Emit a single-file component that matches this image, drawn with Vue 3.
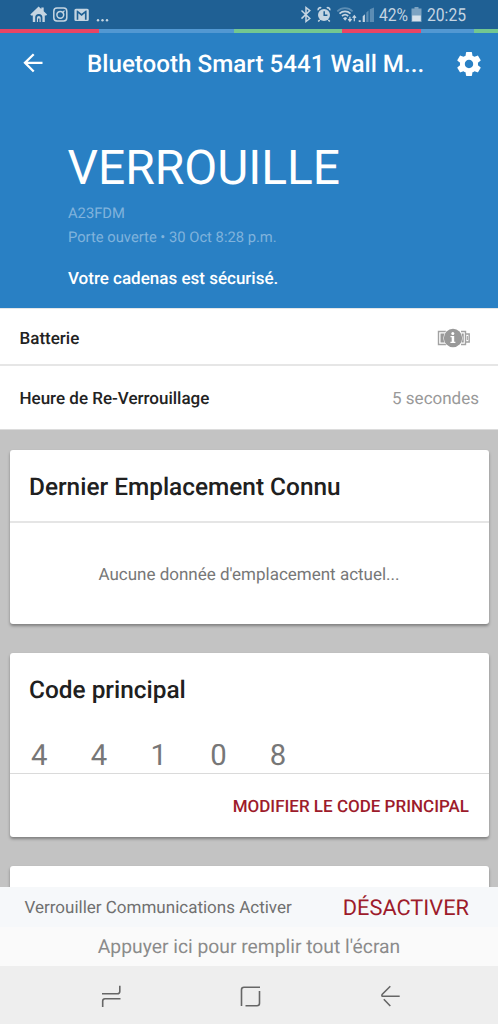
<script setup>
const digits = ['4', '4', '1', '0', '8']
</script>

<template>
  <div class="screen">
    <div class="status">
      <svg class="status-left" viewBox="0 0 84 29" width="84" height="29">
        <g fill="#c5d5e2">
          <path d="M8.600 6.600 11.300 9V7.600h2.400v3.600l3.400 3.300-.9 1H14.800V22h-2.400v-4.400a3.600 3.600 0 0 0-7.200 0V22H2.800v-6.500H1.100l-.8-1z" />
          <path d="M6.900 22v-4.200a1.900 1.900 0 0 1 3.800 0V22H9.500v-3.500H8V22z" />
          <path fill-rule="evenodd" d="M46 8.700h11.200a1.600 1.600 0 0 1 1.600 1.600v9.200a1.600 1.600 0 0 1-1.600 1.600H46a1.600 1.600 0 0 1-1.600-1.600v-9.200A1.600 1.600 0 0 1 46 8.700zM46.700 19.700h1.600v-6.400l3.300 2.700 3.300-2.700v6.400h1.700v-9.200h-.8l-4.200 3.300-4.200-3.300h-.7z" />
          <circle cx="68" cy="20.300" r="1.200" />
          <circle cx="72.500" cy="20.300" r="1.200" />
          <circle cx="77" cy="20.300" r="1.200" />
        </g>
        <g fill="none" stroke="#c5d5e2" stroke-width="1.500">
          <rect x="23.800" y="8" width="13" height="13" rx="3.200" />
          <circle cx="30.300" cy="14.800" r="3.400" />
          <path d="M32 13.200 34.500 10.600" stroke-width="1.200" />
        </g>
      </svg>
      <div class="status-right">
        <svg viewBox="0 0 76 29" width="76" height="29">
          <path d="M1.500 10.500 9.800 18.500 6 21.500V7.500l3.800 3.100-8.300 8" fill="none" stroke="#c5d5e2" stroke-width="1.500" />
          <g fill="none" stroke="#c5d5e2">
            <path d="M18.300 10.200a2 2 0 0 1 2.900-2.300M29.700 10.200a2 2 0 0 0-2.900-2.300" stroke-width="1.700" />
            <path d="m19.700 20-1.500 1.500M28.300 20l1.500 1.500" stroke-width="1.700" />
          </g>
          <circle cx="24" cy="14.900" r="6" fill="#c5d5e2" />
          <path d="M24.200 11.200v4h3.200" fill="none" stroke="#1f5f92" stroke-width="1.500" />
          <g fill="none" stroke-width="1.700">
            <path d="M37.300 11.300c4.400-4.200 10.900-4.200 15.300 0" stroke="#5c8db4" />
            <path d="M39.500 13.600c3.200-3 7.800-3 11 0M42 16c1.900-1.700 4.300-1.700 6.200 0" stroke="#c5d5e2" />
          </g>
          <path d="m43 18.200 2.200-1.200 2 1-2 2.800z" fill="#c5d5e2" />
          <path d="M49.900 21.300v-4.500M48.200 19.200l1.700 2 1.700-2M54.300 21.200v-5.400M52.600 17.800l1.700-2 1.700 2" fill="none" stroke="#c5d5e2" stroke-width="1.200" />
          <path d="M58.700 22v-1.700h2V22zM62.700 22v-5.800l2.200-2V22z" fill="#c5d5e2" />
          <path d="M66.300 22v-9.600l2.200-2V22zM69.800 22V9.300L74 7.500V22z" fill="#5c8db4" />
        </svg>
        <span class="pct">42%</span>
        <svg class="phone-battery" viewBox="0 0 12 29" width="12" height="29">
          <path d="M3.500 7h4v1.600H10.500V22H.5V8.600h3z" fill="#7da3c2" />
          <path d="M1.200 15.500h8.600V21H1.200z" fill="#d7e2eb" />
        </svg>
        <span class="clock">20:25</span>
      </div>
    </div>

    <div class="strip">
      <i class="red"></i><i class="blue"></i><i class="green"></i><i class="red"></i><i class="blue"></i><i class="green"></i>
    </div>

    <header class="hero">
      <div class="toolbar">
        <svg class="back" viewBox="0 0 20 20" width="20" height="20">
          <path d="M20.500 8.800H3M11.700 .2 3 8.800 11.700 17.500" fill="none" stroke="#fff" stroke-width="2.300" />
        </svg>
        <h1>Bluetooth Smart 5441 Wall M...</h1>
        <svg class="gear" viewBox="2 2 20 20" width="24" height="24">
          <path fill="#fff" d="M19.430 12.980c.04-.32.070-.64.070-.98s-.03-.66-.07-.98l2.110-1.650c.19-.15.240-.42.120-.64l-2-3.460c-.12-.22-.39-.3-.61-.22l-2.490 1c-.52-.4-1.080-.73-1.690-.98l-.38-2.650C14.460 2.180 14.250 2 14 2h-4c-.25 0-.46.180-.49.420l-.38 2.650c-.61.250-1.170.590-1.690.98l-2.490-1c-.23-.09-.49 0-.61.220l-2 3.460c-.13.220-.07.490.12.640l2.110 1.650c-.04.320-.07.650-.07.980s.03.660.070.980l-2.110 1.650c-.19.150-.24.420-.12.640l2 3.460c.12.220.39.300.61.220l2.490-1c.52.400 1.080.730 1.690.980l.38 2.650c.03.240.240.420.490.420h4c.25 0 .46-.18.490-.42l.38-2.650c.61-.25 1.170-.59 1.690-.98l2.490 1c.23.090.490 0 .61-.22l2-3.460c.12-.22.070-.49-.12-.64l-2.110-1.650zM12 15.500c-1.930 0-3.500-1.570-3.500-3.500s1.570-3.500 3.500-3.500 3.500 1.570 3.500 3.500-1.570 3.500-3.500 3.500z" />
        </svg>
      </div>
      <div class="state"><span>VERROUILLE</span></div>
      <div class="meta"><span class="serial">A23FDM</span></div>
      <div class="meta"><span class="door">Porte ouverte • 30 Oct 8:28 p.m.</span></div>
      <div class="secured"><span>Votre cadenas est sécurisé.</span></div>
    </header>

    <section class="row battery-row">
      <span class="label-a">Batterie</span>
      <svg class="battery" viewBox="0 0 34 20" width="34" height="20">
        <g fill="none" stroke="#a2a2a2" stroke-width="1.400">
          <path d="M9 3.500H1.500v13H9M24 3.500h4.500v13H24M28.500 6h3.700v8h-3.700" />
        </g>
        <path d="M3.500 5.500H8v9H3.500zM24.500 5.500h2.200v9h-2.200zM29.800 8h1v4h-1z" fill="#999" />
        <circle cx="16" cy="10" r="9.700" fill="#fff" />
        <circle cx="16" cy="10" r="9.200" fill="#999" />
        <circle cx="15.800" cy="5.500" r="1.500" fill="#fff" />
        <path d="M13.500 8h3.700v5.700h1.200V15h-5v-1.300h1.300V9.300h-1.200z" fill="#fff" />
      </svg>
    </section>
    <section class="row relock-row">
      <span class="label-b">Heure de Re-Verrouillage</span>
      <span class="seconds">5 secondes</span>
    </section>

    <main class="content">
      <article class="card location">
        <h2><span class="h-loc">Dernier Emplacement Connu</span></h2>
        <p><span>Aucune donnée d'emplacement actuel...</span></p>
      </article>
      <article class="card code">
        <h2><span class="h-code">Code principal</span></h2>
        <div class="digits">
          <span v-for="(d, i) in digits" :key="i">{{ d }}</span>
        </div>
        <div class="action"><span>MODIFIER LE CODE PRINCIPAL</span></div>
      </article>
      <article class="card next"></article>
    </main>

    <div class="banner">
      <span class="comm">Verrouiller Communications Activer</span>
      <span class="disable">DÉSACTIVER</span>
    </div>
    <div class="hint"><span>Appuyer ici pour remplir tout l'écran</span></div>
    <nav class="nav">
      <svg viewBox="0 0 498 58" width="498" height="58" fill="none" stroke="#666" stroke-width="1.600">
        <path d="M102 27.800h15.500a2.300 2.300 0 0 0 2.300-2.300v-5.800M120.500 32.800H105a2.300 2.300 0 0 0-2.300 2.300V41" />
        <path d="M260 21.300h-16a2.500 2.500 0 0 0-2.500 2.500V40M245.500 39.700h11.500a2.500 2.500 0 0 0 2.500-2.500V25" />
        <path d="M399.700 30.300h-18M390.300 20.300l-8 8a2 2 0 0 0-.3 2M383.800 33.200l6.500 6.800" />
      </svg>
    </nav>
  </div>
</template>

<style>
html, body { overflow: hidden; }
</style>

<style scoped>
.screen {
  width: 498px;
  height: 1024px;
  overflow: hidden;
  display: flex;
  flex-direction: column;
  font-family: Roboto, "Liberation Sans", sans-serif;
  text-rendering: geometricPrecision;
  background: #c3c3c3;
}
.screen > * { flex-shrink: 0; box-sizing: border-box; }
svg { display: block; flex-shrink: 0; overflow: visible; }
span { white-space: nowrap; }
h1, h2, p { margin: 0; }
.status {
  height: 29px;
  background: #1f6094;
  display: flex;
  justify-content: space-between;
  padding: 0 32px 0 30px;
  color: #c5d5e2;
  font-size: 18px;
  line-height: 32px;
}
.status-right { display: flex; }
.pct, .clock { transform: scaleX(.87); transform-origin: 0 50%; }
.pct { margin-left: 3px; width: 32px; }
.phone-battery { margin-right: 4px; }
.clock { width: 39px; }
.strip { height: 4px; display: grid; grid-template-columns: 99px 135px 108px 79px 53px 24px; }
.red { background: #e84565; }
.blue { background: #5298d2; }
.green { background: #73c790; }
.hero {
  height: 275px;
  background: #2980c4;
  color: #fff;
}
.toolbar { height: 62px; display: flex; align-items: center; padding: 0 17px 0 22px; }
h1 { flex: 1; margin-left: 45px; font-size: 24.200px; font-weight: 500; line-height: 62px; white-space: nowrap; }
.state { height: 105px; padding: 50px 0 0 67.500px; box-sizing: border-box; font-size: 47.900px; font-weight: 400; line-height: 46px; }
.meta { padding-left: 68px; line-height: 26px; height: 24px; font-size: 14.750px; color: #80b3dc; }
.secured { padding-left: 68px; margin-top: 17px; line-height: 28px; font-size: 17px; font-weight: 500; }
.row {
  background: #fff;
  display: flex;
  align-items: center;
  justify-content: space-between;
  padding: 0 19px 0 19.500px;
  font-size: 17px;
  line-height: 20px;
  font-weight: 500;
  color: #222;
}
.row span { padding-top: 2px; }
.battery-row { height: 58px; border-top: 1px solid #e3e6e8; border-bottom: 2px solid #e6e6e6; padding-right: 27px; padding-top: 2px; }
.relock-row { height: 64px; border-bottom: 1px solid #dcdcdc; padding-top: 1px; }
.seconds { font-weight: 400; color: #999; }
.content { height: 457px; overflow: hidden; padding: 20px 9.500px 0; }
.card { background: #fff; border-radius: 3px; box-shadow: 0 2px 3px rgba(0, 0, 0, .35); overflow: hidden; }
h2 { height: 73px; line-height: 74px; padding-left: 19.500px; box-sizing: border-box; font-size: 24.400px; font-weight: 500; color: #202020; }
.location { height: 174px; margin-bottom: 29px; }
.location h2 { border-bottom: 2px solid #e5e5e5; }
.location p { text-align: center; line-height: 104px; font-size: 17px; color: #777; }
.code { height: 184px; margin-bottom: 29px; }
.digits { height: 48px; display: flex; border-bottom: 1px solid #dadada; box-sizing: border-box; line-height: 60px; font-size: 29.300px; color: #777; }
.digits span { width: 59.700px; text-align: center; }
.action { text-align: right; padding-right: 19.500px; line-height: 66px; font-size: 17px; font-weight: 500; color: #9d1b2b; }
.next { height: 60px; }
.banner { height: 40px; background: #f6f8fa; display: flex; justify-content: space-between; padding: 0 29px 0 24.500px; line-height: 43px; }
.comm { font-size: 17px; color: #707070; }
.disable { font-size: 21.800px; color: #9d1b2b; }
.hint { height: 39px; line-height: 40px; background: #fafafa; text-align: center; font-size: 19.300px; color: #8b8b8b; }
.nav { height: 58px; background: #eee; }
</style>
